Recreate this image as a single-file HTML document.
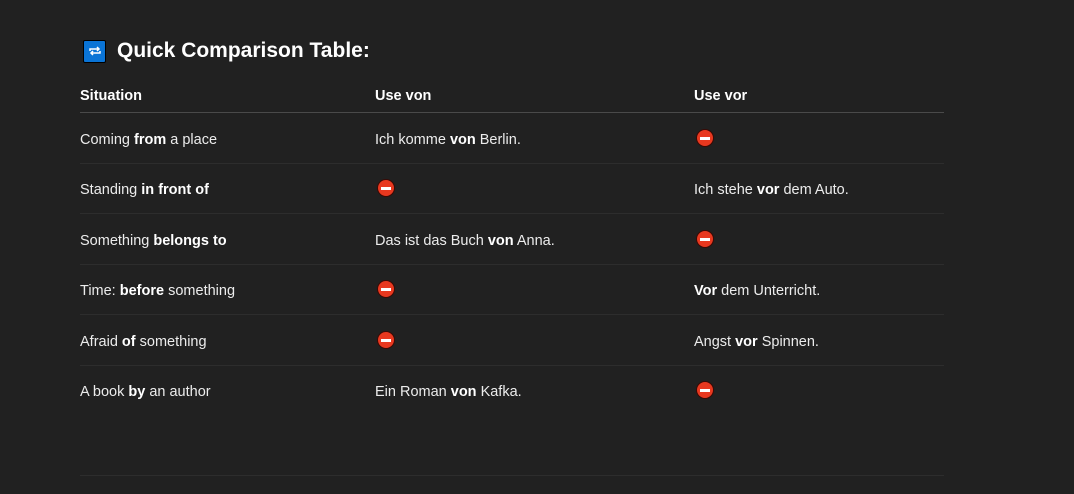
<!DOCTYPE html>
<html><head><style>
body{margin:0;background:#212121;width:1074px;height:494px;overflow:hidden;font-family:"Liberation Sans",sans-serif;color:#ececec;position:relative}
.t{position:absolute;left:83px;top:39px;display:flex;align-items:center;font-size:21px;font-weight:bold;color:#fff}
.ic{width:23px;height:23px;background:#0a74d6;border:1.5px solid #000;box-sizing:border-box;margin-right:11px;border-radius:2px;display:flex;align-items:center;justify-content:center}
.hd{position:absolute;top:88px;font-size:14.5px;font-weight:bold;color:#fff}
.hl{position:absolute;left:80px;width:864px;top:112px;height:1px;background:#4a4a4a}
.rl{position:absolute;left:80px;width:864px;height:1px;background:#2d2d2d}
.c{position:absolute;font-size:14.5px;line-height:18px}
b{color:#fff}
.no{position:absolute;width:16px;height:16px;border-radius:50%;background:#e8381f;box-shadow:0 0 0 1px #3a0a05}
.no::after{content:"";position:absolute;left:3px;top:6.5px;width:10px;height:3px;background:#fff}
</style></head><body>
<div class="t"><div class="ic"><svg width="14" height="12" viewBox="0 0 14 12" fill="none" stroke="#fff" stroke-width="1.5"><path d="M2 6V4h9M9 2l2 2-2 2M12 6v2H3M5 10l-2-2 2-2"/></svg></div>Quick Comparison Table:</div>
<div class="hd" style="left:80px">Situation</div>
<div class="hd" style="left:375px">Use von</div>
<div class="hd" style="left:694px">Use vor</div>
<div class="hl"></div>

<div class="c" style="left:80px;top:131px">Coming <b>from</b> a place</div>
<div class="c" style="left:375px;top:131px">Ich komme <b>von</b> Berlin.</div>
<div class="no" style="left:697px;top:130px"></div>
<div class="rl" style="top:163px"></div>

<div class="c" style="left:80px;top:181px">Standing <b>in front of</b></div>
<div class="no" style="left:378px;top:180px"></div>
<div class="c" style="left:694px;top:181px">Ich stehe <b>vor</b> dem Auto.</div>
<div class="rl" style="top:213px"></div>

<div class="c" style="left:80px;top:232px">Something <b>belongs to</b></div>
<div class="c" style="left:375px;top:232px">Das ist das Buch <b>von</b> Anna.</div>
<div class="no" style="left:697px;top:231px"></div>
<div class="rl" style="top:264px"></div>

<div class="c" style="left:80px;top:282px">Time: <b>before</b> something</div>
<div class="no" style="left:378px;top:281px"></div>
<div class="c" style="left:694px;top:282px"><b>Vor</b> dem Unterricht.</div>
<div class="rl" style="top:314px"></div>

<div class="c" style="left:80px;top:333px">Afraid <b>of</b> something</div>
<div class="no" style="left:378px;top:332px"></div>
<div class="c" style="left:694px;top:333px">Angst <b>vor</b> Spinnen.</div>
<div class="rl" style="top:365px"></div>

<div class="c" style="left:80px;top:383px">A book <b>by</b> an author</div>
<div class="c" style="left:375px;top:383px">Ein Roman <b>von</b> Kafka.</div>
<div class="no" style="left:697px;top:382px"></div>
<div class="rl" style="top:475px"></div>
</body></html>
